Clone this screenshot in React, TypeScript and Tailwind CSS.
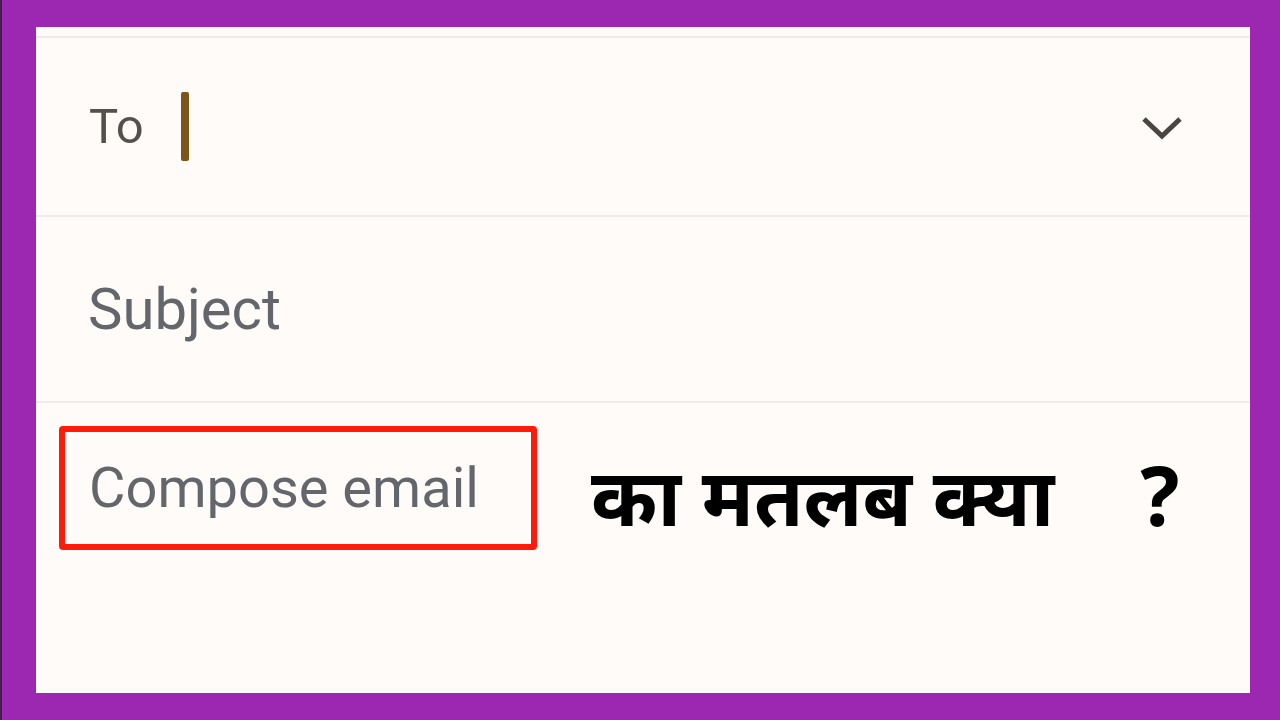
export default function App() {
  return (
    <div className="h-[720px] w-[1280px] overflow-hidden border-l-2 border-[#4a1d52] bg-[#9c27b0] pb-[27px] pl-[34px] pr-[30px] pt-[27px]">
      <div className="flex h-full flex-col bg-[#fffbf8] pt-[9px]">
        <div className="h-[2px] bg-[#efebe8]" />

        {/* To row */}
        <div className="flex h-[179px] items-center border-b-2 border-[#efebe8] pl-[53px] pr-[66px]">
          <span
            className="text-[49px] leading-none text-[#55504b]"
            style={{ fontFamily: "Roboto, 'Noto Sans', sans-serif" }}
          >
            To
          </span>
          <span className="ml-[37px] h-[69px] w-[8px] rounded-[2px] bg-[#7e5518]" />
          <svg
            className="ml-auto h-[30px] w-[44px]"
            viewBox="0 0 44 30"
            fill="none"
            stroke="#4a4540"
            strokeWidth="5"
          >
            <path d="M4 7 L22 24 L40 7" />
          </svg>
        </div>

        {/* Subject row */}
        <div className="flex h-[186px] items-center border-b-2 border-[#efebe8] pl-[52px]">
          <span
            className="text-[58px] leading-none text-[#63666a]"
            style={{ fontFamily: "Roboto, 'Noto Sans', sans-serif" }}
          >
            Subject
          </span>
        </div>

        {/* Body row */}
        <div className="mt-[23px] flex items-center pl-[23px]">
          <div className="flex h-[124px] w-[478px] items-center rounded-[4px] border-[6px] border-[#ff1a0a] pl-[24px]">
            <span
              className="text-[56px] leading-none text-[#63666a]"
              style={{ fontFamily: "Roboto, 'Noto Sans', sans-serif" }}
            >
              Compose email
            </span>
          </div>
          <div
            className="ml-[54px] mt-[12px] flex items-baseline font-bold leading-none text-black"
            style={{ fontFamily: "'Noto Sans', 'Noto Sans Devanagari', sans-serif" }}
          >
            <span className="text-[80px]">का मतलब क्या</span>
            <span className="ml-[86px] text-[82px]">?</span>
          </div>
        </div>
      </div>
    </div>
  );
}
